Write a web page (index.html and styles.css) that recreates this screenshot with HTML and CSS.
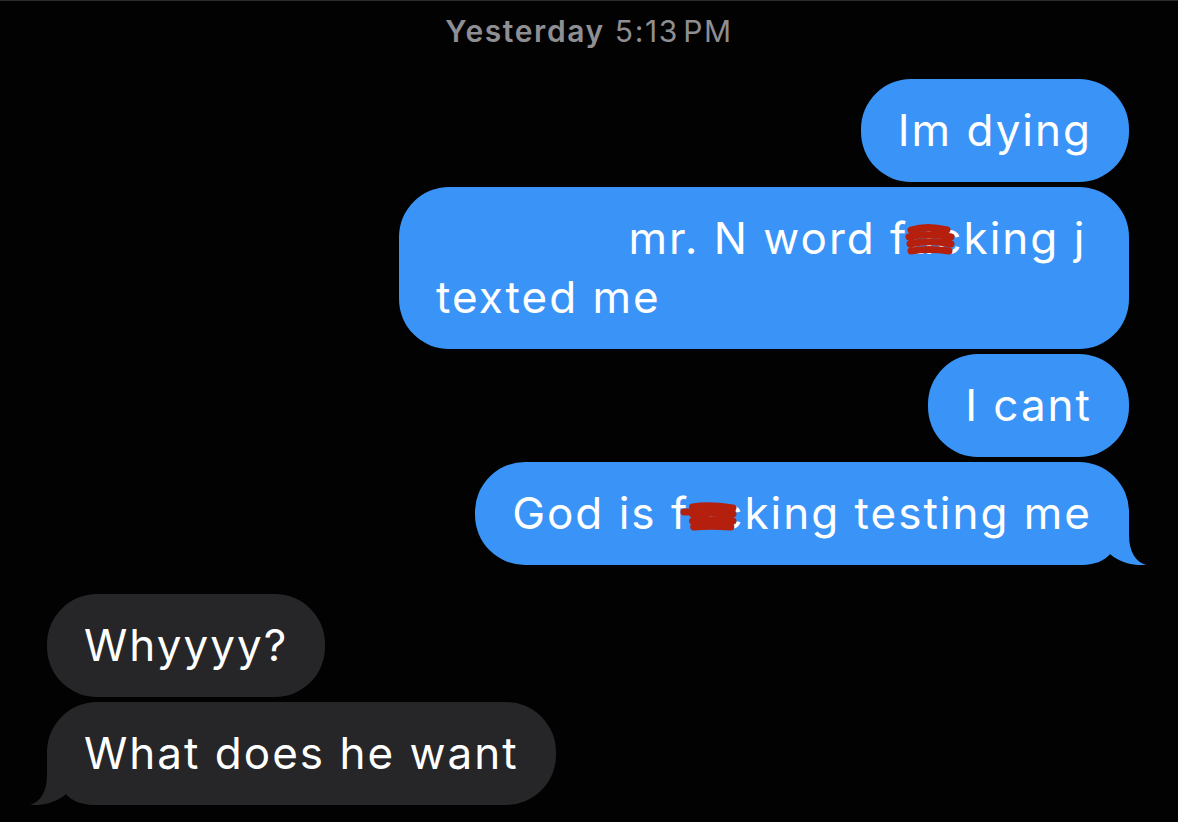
FILE: index.html
```html
<!DOCTYPE html>
<html>
<head>
<meta charset="utf-8">
<link rel="stylesheet" href="styles.css">
</head>
<body>
<div class="screen">
  <div class="stamp"><span class="day">Yesterday</span> 5:13&#8202;PM</div>
  <div class="thread">
    <div class="group sent">
      <div class="bubble">Im dying</div>
      <div class="bubble"><span class="erased"></span> mr. N word f<span class="redact">uc<svg class="scribble" viewBox="0 0 48 36" preserveAspectRatio="none"><path d="M6 7 C16 4 30 4 42 7 M4 14 C16 11 32 11 46 14 M5 21 C18 18 32 18 46 21 M6 28 C18 26 30 26 44 28" /></svg></span>king j texted me</div>
      <div class="bubble">I cant</div>
      <div class="bubble tail">God is f<span class="redact">uc<svg class="scribble two" viewBox="0 0 52 32" preserveAspectRatio="none"><path d="M3 12 L14 12 M11 7 C22 5 36 6 48 8 M11 14 C22 12 36 12 48 14 M11 21 C22 19 36 19 48 21 M12 27 C22 26 34 26 46 27" /></svg></span>king testing me<svg class="tail-shape" viewBox="0 0 66 55"><path d="M0 0 H49 V25 C49 42 56 52 66 55 C55 56 40 53 30 44 C24 51 15 55 0 55 Z"/></svg></div>
    </div>
    <div class="group received">
      <div class="bubble">Whyyyy?</div>
      <div class="bubble tail">What does he want<svg class="tail-shape" viewBox="0 0 66 55"><path d="M0 0 H49 V25 C49 42 56 52 66 55 C55 56 40 53 30 44 C24 51 15 55 0 55 Z"/></svg></div>
    </div>
  </div>
</div>
</body>
</html>
```

FILE: styles.css
```css
html, body {
  margin: 0;
  padding: 0;
  background: #000;
}

.screen {
  width: 1178px;
  height: 822px;
  box-sizing: border-box;
  border-top: 1px solid #2c2c2e;
  background: #020202;
  font-family: Inter, "Noto Sans", "Liberation Sans", sans-serif;
  overflow: hidden;
}

.stamp {
  text-align: center;
  color: #8e8e93;
  font-size: 30px;
  line-height: 36px;
  padding-top: 12px;
  letter-spacing: 1.6px;
}

.stamp .day {
  font-weight: 600;
}

.thread {
  display: flex;
  flex-direction: column;
  gap: 29px;
  padding: 30px 49px 0 47px;
}

.group {
  display: flex;
  flex-direction: column;
  gap: 5px;
}

.group.sent {
  align-items: flex-end;
}

.group.received {
  align-items: flex-start;
}

.bubble {
  position: relative;
  isolation: isolate;
  max-width: 730px;
  box-sizing: border-box;
  padding: 22px 37px;
  border-radius: 50px;
  font-size: 44px;
  line-height: 59px;
  letter-spacing: 2px;
  color: #fff;
}

.sent .bubble {
  background: #3a94f7;
}

.received .bubble {
  background: #262628;
}

.erased {
  display: inline-block;
  width: 178px;
}

.redact {
  position: relative;
}

.scribble {
  position: absolute;
  left: -3px;
  top: 12px;
  width: 48px;
  height: 36px;
  overflow: visible;
}

.scribble path {
  fill: none;
  stroke: #b41f0e;
  stroke-width: 7;
  stroke-linecap: round;
}

.scribble.two {
  left: -8px;
  top: 14px;
  width: 56px;
  height: 32px;
}

.tail-shape {
  position: absolute;
  z-index: -1;
  bottom: 0;
  width: 66px;
  height: 55px;
}

.sent .tail-shape {
  right: -17px;
  fill: #3a94f7;
}

.received .tail-shape {
  left: -17px;
  fill: #262628;
  transform: scaleX(-1);
}
```
